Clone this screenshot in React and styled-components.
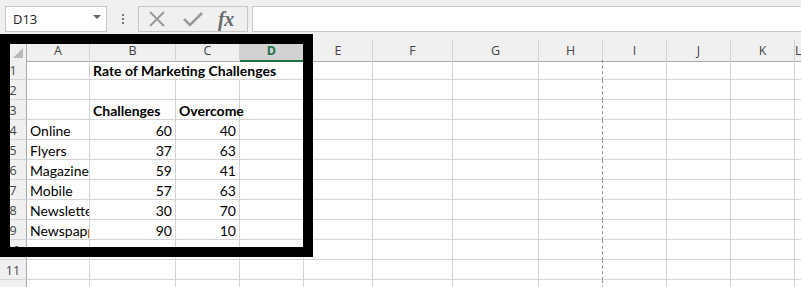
import React from 'react'
import styled, { createGlobalStyle } from 'styled-components'

const GlobalStyle = createGlobalStyle`
    html, body {
        margin: 0;
        padding: 0;
        background: #ffffff;
        overflow: hidden;
    }
    * {
        box-sizing: border-box;
    }
`

const COLS = [27, 63, 86, 64, 64, 69, 80, 86, 64, 64, 64, 64]
const LETTERS = ['A', 'B', 'C', 'D', 'E', 'F', 'G', 'H', 'I', 'J', 'K', 'L']
const TEMPLATE = COLS.map((w) => w + 'px').join(' ') + ' 1fr'

const Pagina = styled.div`
    position: relative;
    width: 801px;
    height: 287px;
    overflow: hidden;
    font-family: Lato, "Liberation Sans", sans-serif;
`

const BarraFormula = styled.div`
    height: 40px;
    background-color: #f0f0f0;
    display: flex;
    align-items: flex-start;
    padding: 6px 0 0 5px;
`

const CaixaNome = styled.div`
    width: 102px;
    height: 26px;
    background: #ffffff;
    border: 1px solid #c6c6c6;
    display: flex;
    align-items: center;
    justify-content: space-between;
    padding: 0 5px 0 7px;
    font-family: "Open Sans", sans-serif;
    font-size: 13px;
    color: #222;
`

const Seta = styled.span`
    width: 0;
    height: 0;
    border-left: 4px solid transparent;
    border-right: 4px solid transparent;
    border-top: 4px solid #666;
    margin-top: -4px;
`

const Pontos = styled.div`
    width: 31px;
    height: 26px;
    display: flex;
    flex-direction: column;
    align-items: center;
    justify-content: center;
    gap: 2px;
    span {
        width: 2px;
        height: 2px;
        background: #777;
    }
`

const CaixaIcones = styled.div`
    width: 110px;
    height: 26px;
    border: 1px solid #c6c6c6;
    display: flex;
    align-items: center;
    padding-left: 9px;
    gap: 17px;
`

const Fx = styled.span`
    font-family: "Liberation Serif", serif;
    font-style: italic;
    font-weight: 700;
    font-size: 20px;
    color: #6a6a6a;
    line-height: 1;
    margin-left: -2px;
    letter-spacing: -0.5px;
`

const CampoFormula = styled.div`
    flex: 1;
    height: 26px;
    margin-left: 4px;
    background: #ffffff;
    border: 1px solid #c6c6c6;
    border-right: none;
`

const Grade = styled.div`
    display: grid;
    grid-template-columns: ${TEMPLATE};
    grid-auto-rows: 20px;
`

const Cabecalho = styled.div`
    height: 22px;
    background: ${(p) => (p.$ativo ? '#d2d2d2' : '#f0f0f0')};
    border-right: 1px solid #d4d4d4;
    border-bottom: ${(p) => (p.$ativo ? '2px solid #217346' : '1px solid #ababab')};
    display: flex;
    align-items: center;
    justify-content: center;
    padding-top: ${(p) => (p.$ativo ? '1px' : '0')};
    font-family: "Open Sans", sans-serif;
    font-size: 12.5px;
    font-weight: ${(p) => (p.$ativo ? 700 : 400)};
    color: ${(p) => (p.$ativo ? '#217346' : '#444')};
`

const Canto = styled.div`
    height: 22px;
    background: #f0f0f0;
    border-right: 1px solid #ababab;
    border-bottom: 1px solid #ababab;
    display: flex;
    align-items: flex-end;
    justify-content: flex-end;
    padding: 0 3px 3px 0;
`

const NumeroLinha = styled.div`
    background: #f0f0f0;
    border-right: 1px solid #ababab;
    border-bottom: 1px solid #d4d4d4;
    display: flex;
    align-items: center;
    justify-content: center;
    padding-top: 1px;
    font-family: "Open Sans", sans-serif;
    font-size: 12.5px;
    color: #444;
`

const Celula = styled.div`
    grid-column: span ${(p) => p.$span || 1};
    border-right: ${(p) => (p.$quebra ? '1px dashed #8c8c8c' : '1px solid #d4d4d4')};
    border-bottom: 1px solid #d4d4d4;
    display: flex;
    align-items: center;
    justify-content: ${(p) => (p.$direita ? 'flex-end' : 'flex-start')};
    padding: 1px 3px 0 3px;
    font-size: 14px;
    font-weight: ${(p) => (p.$negrito ? 700 : 400)};
    color: #000;
    white-space: nowrap;
    overflow: ${(p) => (p.$corta ? 'hidden' : 'visible')};
`

const Moldura = styled.div`
    position: absolute;
    left: 0;
    top: 34px;
    width: 313px;
    height: 223px;
    border: 10px solid #000;
    pointer-events: none;
`

const dados = {
    1: [null, { t: 'Rate of Marketing Challenges', b: true, span: 3 }],
    3: [null, { t: 'Challenges', b: true }, { t: 'Overcome', b: true }],
    4: ['Online', 60, 40],
    5: ['Flyers', 37, 63],
    6: ['Magazine', 59, 41],
    7: ['Mobile', 57, 63],
    8: ['Newsletter', 30, 70],
    9: ['Newspapper', 90, 10],
}

function Linha({ n, rotulo }) {
    const linha = dados[n] || []
    const celulas = []
    let col = 0
    while (col < 12) {
        const v = linha[col]
        const quebra = col === 7
        if (v && typeof v === 'object') {
            celulas.push(
                <Celula key={col} $span={v.span} $negrito={v.b}>{v.t}</Celula>
            )
            col += v.span || 1
            continue
        }
        if (typeof v === 'number') {
            celulas.push(<Celula key={col} $direita>{v}</Celula>)
        } else if (typeof v === 'string') {
            celulas.push(<Celula key={col} $corta>{v}</Celula>)
        } else {
            celulas.push(<Celula key={col} $quebra={quebra} />)
        }
        col++
    }
    return (
        <>
            <NumeroLinha>{rotulo === false ? null : n}</NumeroLinha>
            {celulas}
        </>
    )
}

export default function App() {
    return (
        <Pagina>
            <GlobalStyle />
            <BarraFormula>
                <CaixaNome>
                    D13
                    <Seta />
                </CaixaNome>
                <Pontos>
                    <span /><span /><span />
                </Pontos>
                <CaixaIcones>
                    <svg width="18" height="16" viewBox="0 0 18 16">
                        <path d="M2 1 L16 15 M16 1 L2 15" stroke="#9a9a9a" strokeWidth="2" fill="none" />
                    </svg>
                    <svg width="20" height="16" viewBox="0 0 20 16">
                        <path d="M1 8 L7 14 L19 2" stroke="#9a9a9a" strokeWidth="2.6" fill="none" />
                    </svg>
                    <Fx>fx</Fx>
                </CaixaIcones>
                <CampoFormula />
            </BarraFormula>
            <Grade>
                <Canto>
                    <svg width="10" height="10" viewBox="0 0 10 10">
                        <polygon points="10,0 10,10 0,10" fill="#b9b9b9" />
                    </svg>
                </Canto>
                {LETTERS.map((l) => (
                    <Cabecalho key={l} $ativo={l === 'D'}>{l}</Cabecalho>
                ))}
                {[1, 2, 3, 4, 5, 6, 7, 8, 9, 10, 11, 12].map((n) => (
                    <Linha key={n} n={n} rotulo={n < 12} />
                ))}
            </Grade>
            <Moldura />
        </Pagina>
    )
}
